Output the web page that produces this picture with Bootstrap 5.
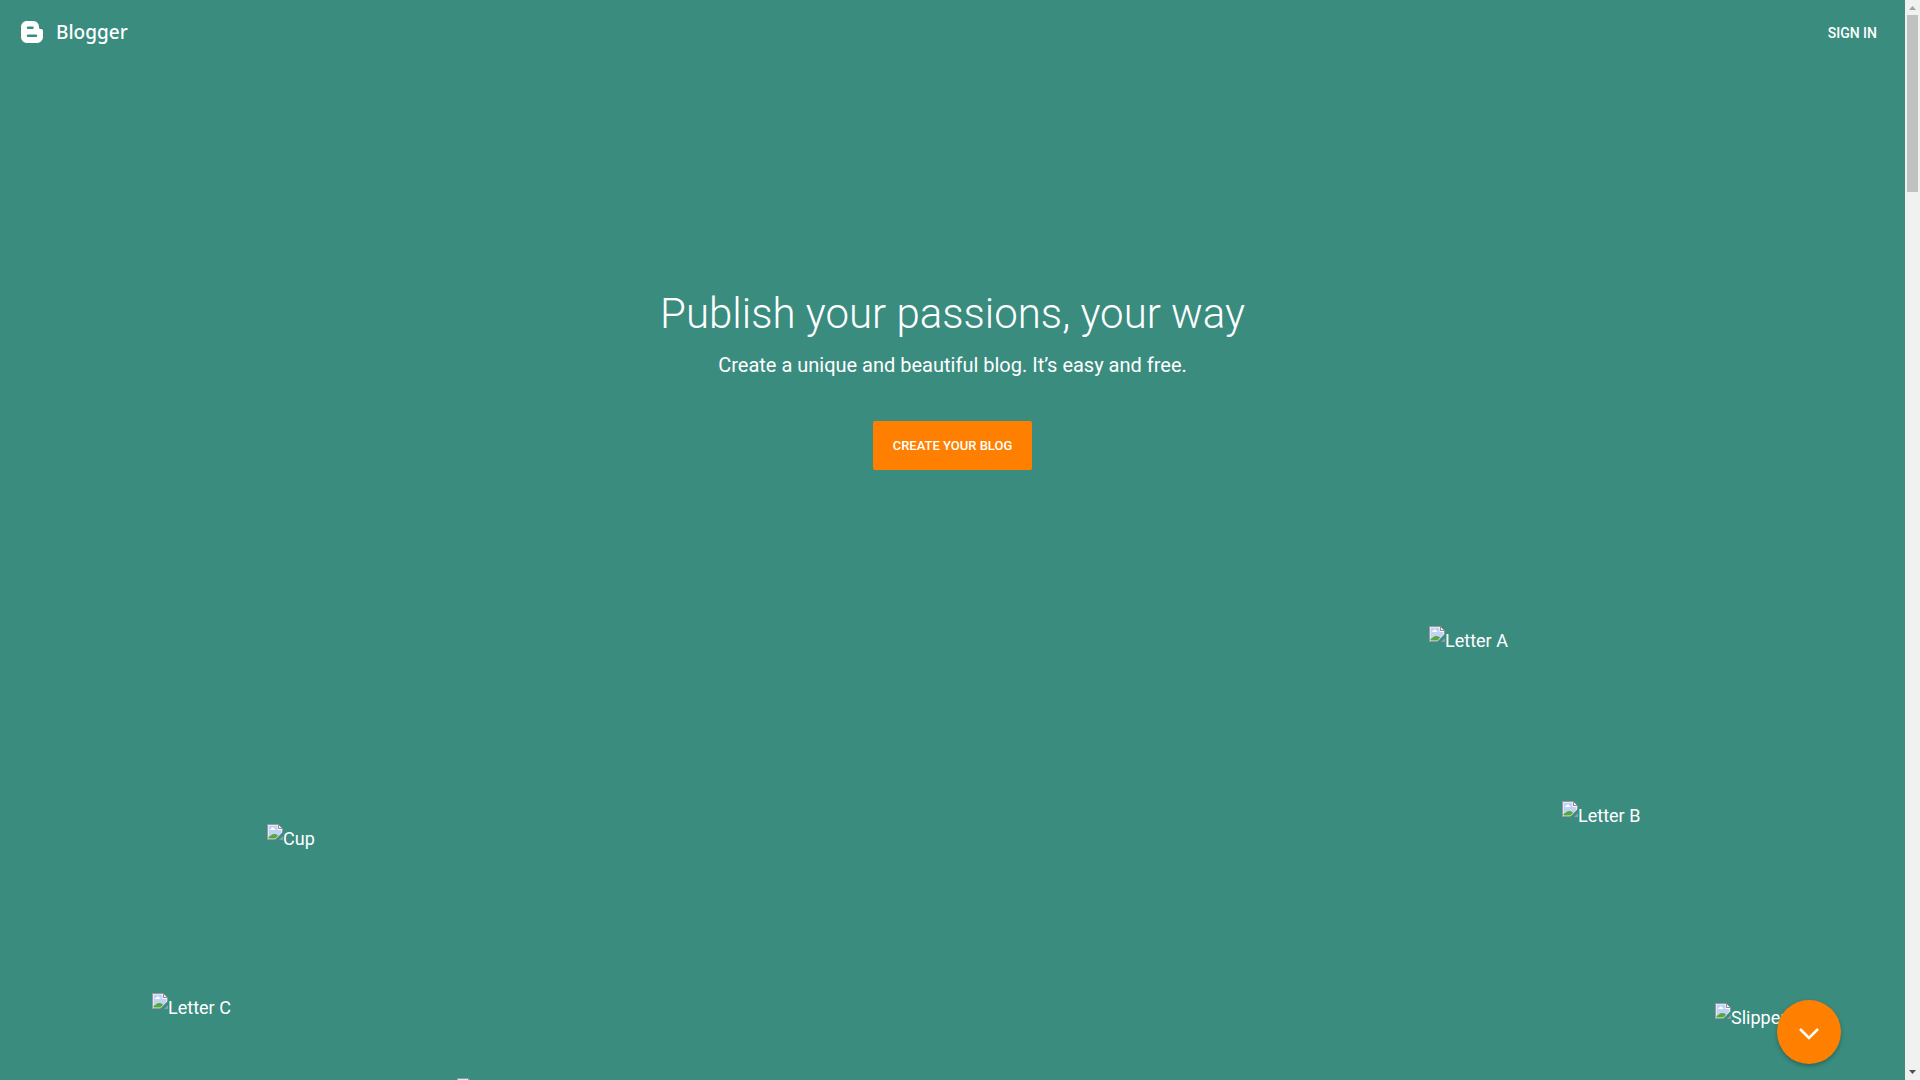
<!DOCTYPE html>
<html lang="en">
<head>
<meta charset="utf-8">
<meta name="viewport" content="width=device-width, initial-scale=1">
<title>Blogger</title>
<link href="https://cdn.jsdelivr.net/npm/bootstrap@5.3.0/dist/css/bootstrap.min.css" rel="stylesheet">
<style>
body { font-family: Roboto, "Noto Sans", sans-serif; background: #3a8c7f; }
.landing { background: #3a8c7f; }
.topbar { padding: 16px 28px 16px 20px; }
.brand-name { font-family: "Noto Sans", "Open Sans", sans-serif; font-size: 19px; line-height: 32px; font-weight: 500; }
.signin { font-size: 14px; line-height: 34px; font-weight: 500; }
.hero { padding-top: 220px; }
.hero-title { font-size: 42px; line-height: 56px; font-weight: 300; margin-bottom: 7px; }
.hero-sub { font-size: 20px; line-height: 32px; margin-bottom: 40px; }
.cta { background: #ff8000; border: 0; border-radius: 2px; padding: 14px 20px; font-size: 13px; line-height: 21px; font-weight: 500; }
.cta:hover, .next:hover { background: #f07800; }
.piece { position: absolute; font-size: 18px; line-height: 30px; white-space: nowrap; }
.piece svg { flex: none; }
.letter-a { left: calc(100% - 476px); bottom: 424px; }
.letter-b { left: calc(100% - 343px); bottom: 249px; }
.cup { left: 267px; bottom: 226px; }
.letter-c { left: 152px; bottom: 57px; }
.slippers { left: calc(100% - 190px); bottom: 47px; }
.cut-off { left: 457px; bottom: -28px; }
.next { position: absolute; right: 64px; bottom: 16px; width: 64px; height: 64px; background: #ff8000; box-shadow: 0 2px 4px rgba(0,0,0,.28); }
.scroll-track { width: 15px; background: #f1f1f1; padding: 6px 2px 6px 2px; }
.scroll-thumb { height: 177px; background: #c1c1c1; margin-top: 5px; width: 11px; }
</style>
<script src="https://cdn.jsdelivr.net/npm/bootstrap@5.3.0/dist/js/bootstrap.bundle.min.js"></script>
</head>
<body>
<svg width="0" height="0" class="position-absolute" aria-hidden="true">
  <symbol id="broken" viewBox="0 0 16 16">
    <path d="M0 0H11L16 5V8L8 16H0Z" fill="#999"/>
    <path d="M1 1H11V5H15V8.500L8.500 15H1Z" fill="#fff"/>
    <path d="M1.500 1.500H10.500V6H14.500V8.500L9 14.500H1.500Z" fill="#c0d2f6"/>
    <path d="M3 6C3 4.500 4.500 4.500 5 4C6 3 7.500 4 7.500 5C9 5 8.500 6 8 6Z" fill="#fff"/>
    <path d="M1.500 14.500V13C4 11.500 5 10 7 10C8.500 10 10 10.500 11 11.500L8.500 14.500Z" fill="#55a83a"/>
    <path d="M11.500 0.500V4.500H15.500Z" fill="#f4f4f4" stroke="#8f8f8f"/>
    <path d="M16 12V16H12Z" fill="#999"/>
  </symbol>
</svg>
<div class="d-flex min-vh-100">
  <div class="landing flex-grow-1 position-relative overflow-hidden text-white">
    <header class="topbar d-flex justify-content-between align-items-start">
      <a href="#" class="d-flex align-items-center text-white text-decoration-none gap-2">
        <svg width="24" height="32" viewBox="0 0 24 32" aria-hidden="true">
          <path fill="#fff" fill-rule="evenodd" d="M7 5H13C17 5 19 8 19 11C19 12.600 19.500 13 20.500 13C22 13 23 13.500 23 15V20.500C23 24.500 20.500 27 16.500 27H7.500C3.500 27 1 24.500 1 20.500V11.500C1 7.500 3.500 5 7 5ZM8 10.500A1.250 1.250 0 0 0 8 13H12.500A1.250 1.250 0 0 0 12.500 10.500ZM8 18.500A1.250 1.250 0 0 0 8 21H16A1.250 1.250 0 0 0 16 18.500Z"/>
        </svg>
        <span class="brand-name ps-1">Blogger</span>
      </a>
      <a href="#" class="signin text-white text-decoration-none">SIGN IN</a>
    </header>
    <main class="hero text-center">
      <h1 class="hero-title">Publish your passions, your way</h1>
      <p class="hero-sub">Create a unique and beautiful blog. It’s easy and free.</p>
      <button type="button" class="btn cta text-white">CREATE YOUR BLOG</button>
    </main>
    <div class="piece letter-a d-flex"><svg width="16" height="16"><use href="#broken"/></svg>Letter A</div>
    <div class="piece letter-b d-flex"><svg width="16" height="16"><use href="#broken"/></svg>Letter B</div>
    <div class="piece cup d-flex"><svg width="16" height="16"><use href="#broken"/></svg>Cup</div>
    <div class="piece letter-c d-flex"><svg width="16" height="16"><use href="#broken"/></svg>Letter C</div>
    <div class="piece slippers d-flex"><svg width="16" height="16"><use href="#broken"/></svg>Slippers</div>
    <div class="piece cut-off d-flex"><svg width="16" height="30" viewBox="0 0 16 30"><use href="#broken" width="16" height="16"/></svg></div>
    <button type="button" class="btn next rounded-circle border-0 p-0 d-flex align-items-center justify-content-center" aria-label="Next section">
      <svg width="24" height="24" viewBox="0 0 24 24" fill="none" stroke="#fff" stroke-width="2.500" aria-hidden="true"><path d="M3 9L12 18L21 9"/></svg>
    </button>
  </div>
  <div class="scroll-track vh-100 d-flex flex-column justify-content-between flex-shrink-0" aria-hidden="true">
    <div>
      <svg width="11" height="4" viewBox="0 0 11 4" class="d-block"><path d="M2 4L5.500 0L9 4Z" fill="#a3a3a3"/></svg>
      <div class="scroll-thumb"></div>
    </div>
    <svg width="11" height="4" viewBox="0 0 11 4" class="d-block"><path d="M2 0H9L5.500 4Z" fill="#505050"/></svg>
  </div>
</div>
</body>
</html>
